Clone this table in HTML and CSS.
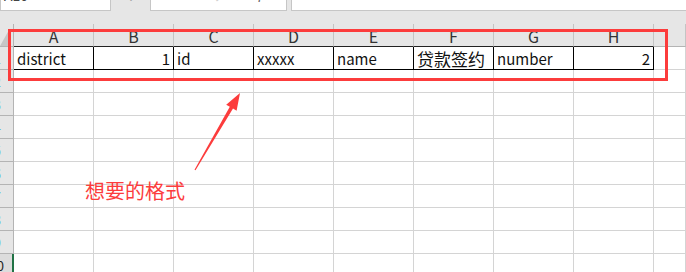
FILE: index.html
```html
<!DOCTYPE html>
<html lang="zh-CN">
<head>
  <meta charset="UTF-8" />
  <meta name="viewport" content="width=device-width, initial-scale=1.0"/>
  <title>格式示例</title>
  <link rel="stylesheet" href="styles.css">
</head>
<body>
<div class="page">
  <!-- formula bar, only its lower edge is in view -->
  <div class="formula-bar">
    <div class="name-box"><span>A10</span></div>
    <div class="grip">⋮</div>
    <div class="fx-tools"><span>✕</span><span>✓</span><span class="fx">fx</span></div>
    <div class="fx-input"></div>
  </div>

  <div class="sheet">
    <div class="corner"></div>
    <div class="col">A</div><div class="col">B</div><div class="col">C</div><div class="col">D</div>
    <div class="col">E</div><div class="col">F</div><div class="col">G</div><div class="col">H</div>
    <div class="col rest"></div>

    <div class="rh"><span>1</span></div>
    <div class="cell on">district</div><div class="cell on num">1</div><div class="cell on">id</div><div class="cell on">xxxxx</div>
    <div class="cell on">name</div><div class="cell on cjk">贷款签约</div><div class="cell on">number</div><div class="cell on num">2</div>
    <div class="cell"></div>

    <div class="rh"><span>2</span></div><div class="cell"></div><div class="cell"></div><div class="cell"></div><div class="cell"></div><div class="cell"></div><div class="cell"></div><div class="cell"></div><div class="cell"></div><div class="cell"></div>
    <div class="rh"><span>3</span></div><div class="cell"></div><div class="cell"></div><div class="cell"></div><div class="cell"></div><div class="cell"></div><div class="cell"></div><div class="cell"></div><div class="cell"></div><div class="cell"></div>
    <div class="rh"><span>4</span></div><div class="cell"></div><div class="cell"></div><div class="cell"></div><div class="cell"></div><div class="cell"></div><div class="cell"></div><div class="cell"></div><div class="cell"></div><div class="cell"></div>
    <div class="rh"><span>5</span></div><div class="cell"></div><div class="cell"></div><div class="cell"></div><div class="cell"></div><div class="cell"></div><div class="cell"></div><div class="cell"></div><div class="cell"></div><div class="cell"></div>
    <div class="rh"><span>6</span></div><div class="cell"></div><div class="cell"></div><div class="cell"></div><div class="cell"></div><div class="cell"></div><div class="cell"></div><div class="cell"></div><div class="cell"></div><div class="cell"></div>
    <div class="rh"><span>7</span></div><div class="cell"></div><div class="cell"></div><div class="cell"></div><div class="cell"></div><div class="cell"></div><div class="cell"></div><div class="cell"></div><div class="cell"></div><div class="cell"></div>
    <div class="rh"><span>8</span></div><div class="cell"></div><div class="cell"></div><div class="cell"></div><div class="cell"></div><div class="cell"></div><div class="cell"></div><div class="cell"></div><div class="cell"></div><div class="cell"></div>
    <div class="rh"><span>9</span></div><div class="cell"></div><div class="cell"></div><div class="cell"></div><div class="cell"></div><div class="cell"></div><div class="cell"></div><div class="cell"></div><div class="cell"></div><div class="cell"></div>
    <div class="rh active"><span>10</span></div><div class="cell"></div><div class="cell"></div><div class="cell"></div><div class="cell"></div><div class="cell"></div><div class="cell"></div><div class="cell"></div><div class="cell"></div><div class="cell"></div>
  </div>

  <!-- annotation drawn on top of the sheet -->
  <div class="mark-box"></div>
  <svg class="mark-arrow" width="686" height="272" viewBox="0 0 686 272">
    <polygon points="240,93 236.6,110.7 233,108.6 195.5,170.3 194.5,169.7 229.8,106.8 226.2,104.7" fill="#fc3c3c"/>
  </svg>
  <div class="mark-note">想要的格式</div>
</div>
</body>
</html>
```

FILE: styles.css
```css
html, body {
  margin: 0;
  padding: 0;
  background: #fff;
  overflow: hidden;
}
.page {
  position: relative;
  width: 686px;
  height: 272px;
  overflow: hidden;
  font-family: "Noto Sans CJK SC", "Noto Sans", sans-serif;
}

/* formula bar, scrolled so only its bottom edge shows */
.formula-bar {
  height: 24px;
  background: #e6e6e6;
  display: flex;
  align-items: flex-start;
}
.name-box, .fx-tools, .fx-input {
  height: 11px;
  background: #fff;
  border: 1px solid #c6c6c6;
  border-top: none;
  box-sizing: border-box;
  overflow: hidden;
}
.name-box {
  width: 111px;
  padding-left: 3px;
  font-size: 14px;
  line-height: 14px;
  color: #444;
}
.name-box span {
  display: block;
  margin-top: -12px;
}
.grip {
  position: relative;
  width: 39px;
  overflow: hidden;
  text-align: center;
  color: #aaa;
  font-size: 14px;
  line-height: 14px;
}
.fx-tools {
  width: 137px;
  display: flex;
  gap: 26px;
  padding-left: 24px;
  color: #d2d2d2;
  font-size: 15px;
  line-height: 15px;
}
.fx-tools span, .grip {
  margin-top: -13px;
  height: 24px;
}
.fx-tools .fx {
  font-family: "Liberation Serif", serif;
  font-style: italic;
  color: #666;
  margin-left: 8px;
}
.fx-input {
  flex: 1;
  margin-left: 4px;
  border-right: none;
}

/* grid */
.sheet {
  display: grid;
  grid-template-columns: 14px repeat(8, 80px) 1fr;
  grid-auto-rows: 23px;
  font-size: 15px;
  color: #111;
}
.sheet > div {
  box-sizing: border-box;
  border-right: 1px solid #d4d4d4;
  border-bottom: 1px solid #d4d4d4;
  overflow: hidden;
  white-space: nowrap;
}
.sheet .corner {
  position: relative;
  background: #e6e6e6;
  border-right-color: #b4b4b4;
  border-bottom-color: #b4b4b4;
}
.corner::after {
  content: "";
  position: absolute;
  left: 0;
  top: 6px;
  width: 9px;
  height: 16px;
  background: #c6c6c6;
  clip-path: polygon(0 100%, 100% 0, 100% 100%, 0 100%);
}
.sheet .col {
  background: #e6e6e6;
  border-right-color: #c4c4c4;
  border-bottom-color: #222;
  text-align: center;
  font-size: 16px;
  line-height: 25px;
  color: #333;
}
.sheet .col.rest {
  border-bottom-color: #b4b4b4;
}
.sheet .rh {
  background: #e6e6e6;
  border-right-color: #b4b4b4;
  border-bottom-color: #b4b4b4;
  display: flex;
  justify-content: flex-end;
  align-items: center;
  padding-right: 12px;
  color: #5ab8e8;
  font-size: 13px;
}
.sheet .rh.active {
  background: #dcdcdc;
  border-right: 2px solid #217346;
  padding-right: 8px;
  color: #222;
}
.sheet .cell {
  padding: 0 3px;
  line-height: 23px;
}
.sheet .cell.cjk {
  font-size: 17px;
}
.sheet .cell.on {
  border-right-color: #000;
  border-bottom-color: #000;
}
.sheet .cell.num {
  text-align: right;
}

/* annotation */
.mark-box {
  position: absolute;
  left: 8px;
  top: 29px;
  width: 660px;
  height: 52px;
  box-sizing: border-box;
  border: 3px solid #fc3c3c;
}
.mark-arrow {
  position: absolute;
  left: 0;
  top: 0;
}
.mark-note {
  position: absolute;
  left: 85px;
  top: 177px;
  font-size: 20px;
  line-height: 28px;
  color: #fc3c3c;
}
```
